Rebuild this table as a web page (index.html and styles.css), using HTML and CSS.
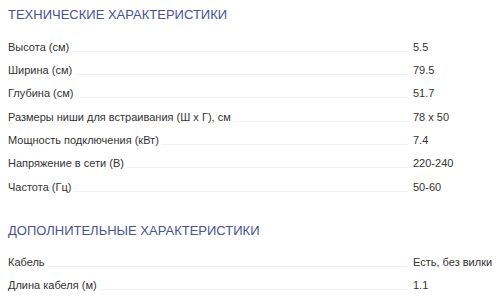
FILE: index.html
```html
<!DOCTYPE html>
<html lang="ru">
<head>
<meta charset="utf-8">
<title>Характеристики</title>
<link rel="stylesheet" href="styles.css">
</head>
<body>
<section class="specs">
  <h2 class="specs-title">ТЕХНИЧЕСКИЕ ХАРАКТЕРИСТИКИ</h2>
  <div class="rows">
    <div class="row"><span class="label">Высота (см)</span><span class="leader"></span><span class="value">5.5</span></div>
    <div class="row"><span class="label">Ширина (см)</span><span class="leader"></span><span class="value">79.5</span></div>
    <div class="row"><span class="label">Глубина (см)</span><span class="leader"></span><span class="value">51.7</span></div>
    <div class="row"><span class="label">Размеры ниши для встраивания (Ш х Г), см</span><span class="leader"></span><span class="value">78 x 50</span></div>
    <div class="row"><span class="label">Мощность подключения (кВт)</span><span class="leader"></span><span class="value">7.4</span></div>
    <div class="row"><span class="label">Напряжение в сети (В)</span><span class="leader"></span><span class="value">220-240</span></div>
    <div class="row"><span class="label">Частота (Гц)</span><span class="leader"></span><span class="value">50-60</span></div>
  </div>
</section>
<section class="specs specs-extra">
  <h2 class="specs-title">ДОПОЛНИТЕЛЬНЫЕ ХАРАКТЕРИСТИКИ</h2>
  <div class="rows">
    <div class="row"><span class="label">Кабель</span><span class="leader"></span><span class="value">Есть, без вилки</span></div>
    <div class="row"><span class="label">Длина кабеля (м)</span><span class="leader"></span><span class="value">1.1</span></div>
  </div>
</section>
</body>
</html>
```
FILE: styles.css
```css
html, body {
  margin: 0;
  padding: 0;
  background: #ffffff;
}
body {
  padding: 0 8px;
  font-family: "Liberation Sans", Arial, sans-serif;
  color: #333333;
}
.specs-title {
  margin: 7px 0 0;
  font-size: 13px;
  line-height: 16px;
  font-weight: normal;
  color: #48538f;
  letter-spacing: 0;
}
.specs-extra .specs-title {
  margin-top: 29px;
}
.rows {
  display: flex;
  flex-direction: column;
  padding-top: 7.4px;
}
.specs-extra .rows {
  padding-top: 6.7px;
}
.row {
  display: flex;
  align-items: flex-end;
  height: 23.33px;
  font-size: 11px;
  line-height: 13px;
}
.label {
  white-space: nowrap;
}
.leader {
  flex: 1;
  margin: 0 5px 2px 3px;
  border-bottom: 1px solid #f2f2f2;
}
.value {
  width: 79px;
  flex: none;
  white-space: nowrap;
}
```
